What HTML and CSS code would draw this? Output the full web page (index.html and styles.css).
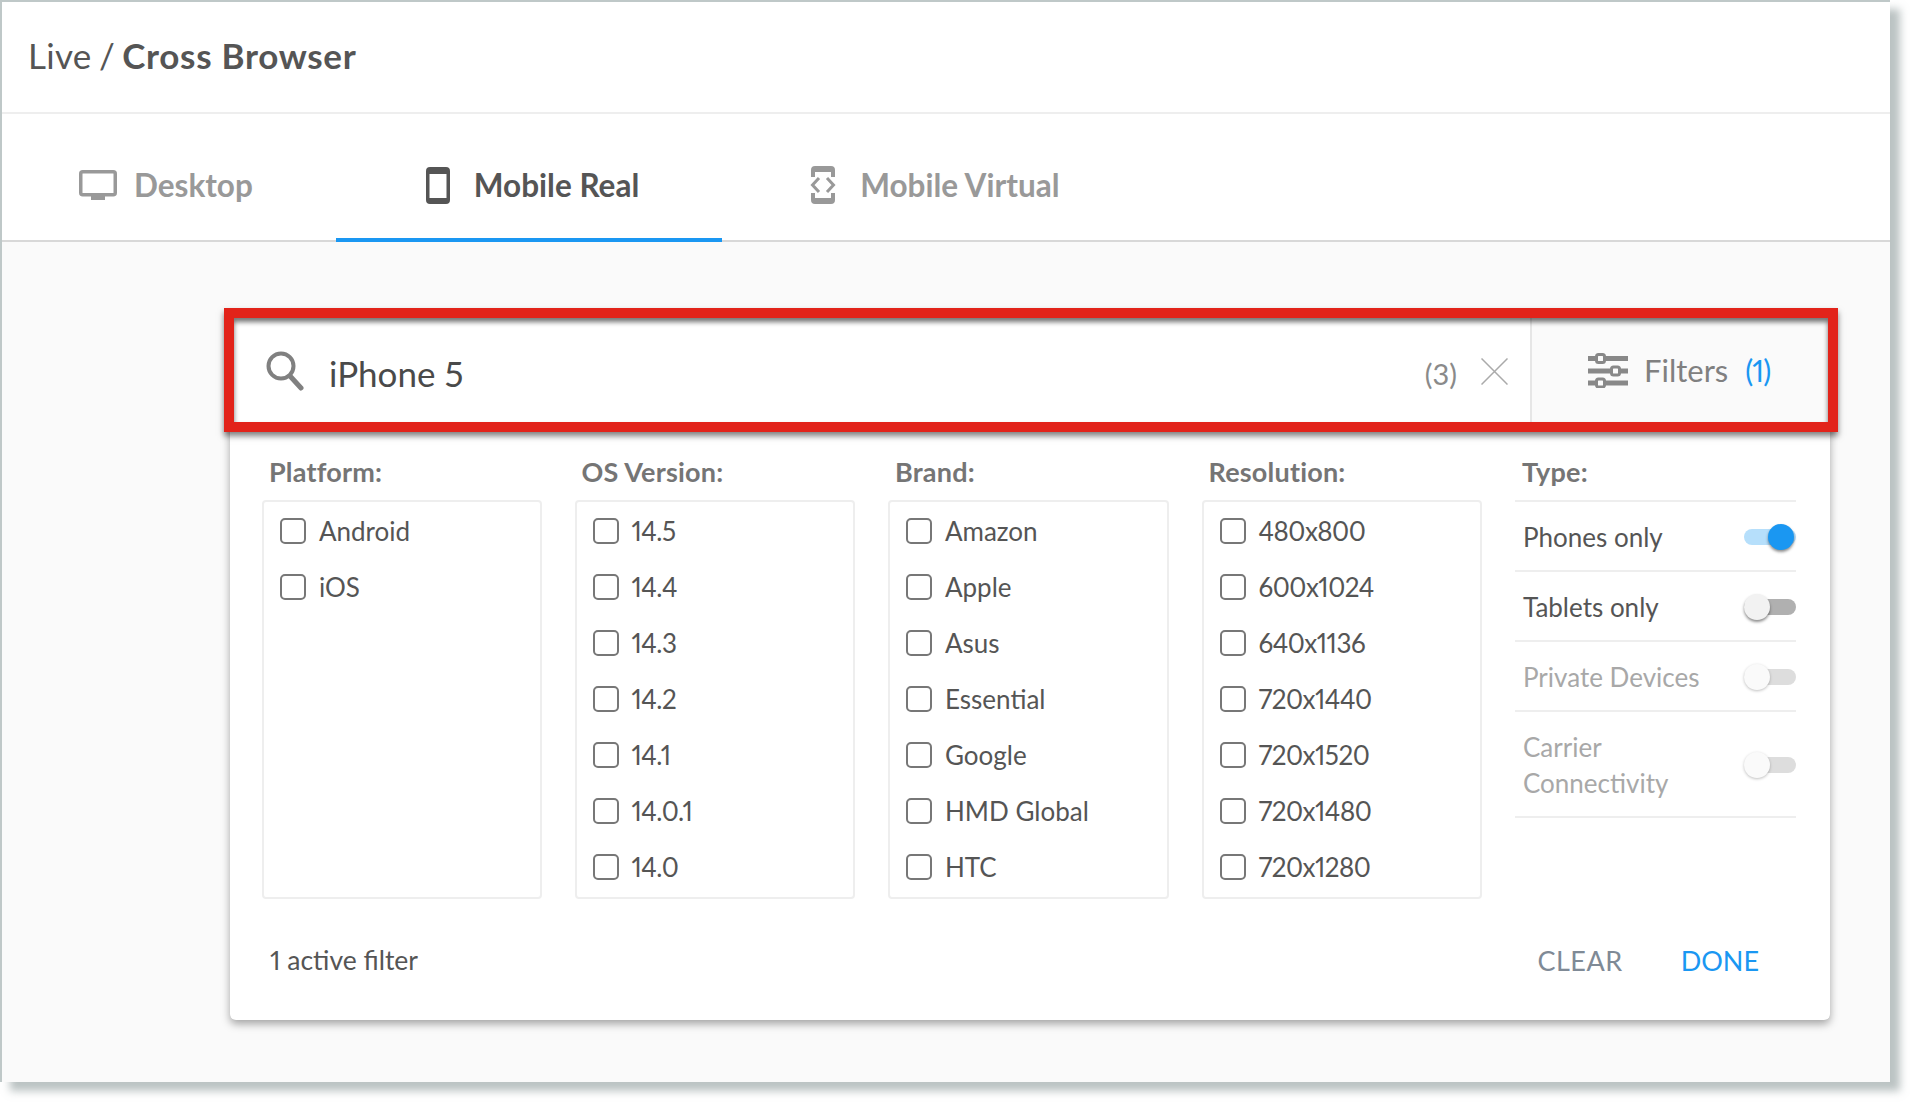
FILE: index.html
```html
<!DOCTYPE html>
<html lang="en">
<head>
    <meta charset="UTF-8">
    <title>Live / Cross Browser</title>
    <link rel="stylesheet" href="styles.css">
</head>
<body>
    <div class="window">
        <header class="title-bar"><span>Live / <strong>Cross Browser</strong></span></header>

        <nav class="tabs">
            <a class="tab">
                <svg class="tab-icon" width="38" height="30" viewBox="0 0 38 30">
                    <rect x="1.750" y="1.750" width="34.500" height="23" rx="2" fill="none" stroke="#999" stroke-width="3.500"/>
                    <rect x="12" y="25" width="14" height="5" fill="#999"/>
                </svg>
                Desktop
            </a>
            <a class="tab">
                <svg class="tab-icon" width="24" height="37" viewBox="0 0 24 37">
                    <path fill-rule="evenodd" d="M4 0h16a4 4 0 0 1 4 4v29a4 4 0 0 1-4 4H4a4 4 0 0 1-4-4V4a4 4 0 0 1 4-4zM3.500 7v24h17V7z" fill="#555"/>
                </svg>
                Mobile Real
            </a>
            <a class="tab">
                <svg class="tab-icon" width="26" height="38" viewBox="0 0 26 38">
                    <path d="M1 11V4a4 4 0 0 1 4-4h16a4 4 0 0 1 4 4v7h-4V6H5v5zM1 27v7a4 4 0 0 0 4 4h16a4 4 0 0 0 4-4v-7h-4v5H5v-5z" fill="#999"/>
                    <path d="M9 12l-6.500 7 6.500 7M17 12l6.500 7-6.500 7" fill="none" stroke="#999" stroke-width="3"/>
                </svg>
                Mobile Virtual
            </a>
        </nav>

        <main class="content">
            <section class="panel">
                <div class="search-bar">
                    <div class="search-box">
                        <svg class="search-icon" width="38" height="40" viewBox="0 0 38 40">
                            <circle cx="15" cy="15" r="12.500" fill="none" stroke="#808080" stroke-width="4"/>
                            <path d="M24 25l11 12" fill="none" stroke="#808080" stroke-width="5" stroke-linecap="round"/>
                        </svg>
                        <span class="search-text">iPhone 5</span>
                        <span class="search-count">(3)</span>
                        <svg class="search-clear" width="27" height="27" viewBox="0 0 27 27">
                            <path d="M0.500 0.500l26 26M26.500 0.500l-26 26" fill="none" stroke="#aaa" stroke-width="1.500"/>
                        </svg>
                    </div>
                    <div class="filter-toggle">
                        <svg width="40" height="35" viewBox="0 0 40 35">
                            <g fill="none" stroke="#888">
                                <path d="M0 5.500h40M0 18h40M0 30h40" stroke-width="5"/>
                                <rect x="8.500" y="1.500" width="8" height="8" rx="2" fill="#fafafa" stroke-width="3"/>
                                <rect x="23.500" y="14" width="8" height="8" rx="2" fill="#fafafa" stroke-width="3"/>
                                <rect x="8.500" y="26" width="8" height="8" rx="2" fill="#fafafa" stroke-width="3"/>
                            </g>
                        </svg>
                        <span class="filter-label">Filters</span>
                        <span class="filter-count">(1)</span>
                    </div>
                </div>

                <div class="filters">
                    <div class="filter-col">
                        <h4>Platform:</h4>
                        <ul class="option-box">
                            <li><span class="checkbox"></span>Android</li>
                            <li><span class="checkbox"></span>iOS</li>
                        </ul>
                    </div>
                    <div class="filter-col">
                        <h4>OS Version:</h4>
                        <ul class="option-box numeric">
                            <li><span class="checkbox"></span>14.5</li>
                            <li><span class="checkbox"></span>14.4</li>
                            <li><span class="checkbox"></span>14.3</li>
                            <li><span class="checkbox"></span>14.2</li>
                            <li><span class="checkbox"></span>14.1</li>
                            <li><span class="checkbox"></span>14.0.1</li>
                            <li><span class="checkbox"></span>14.0</li>
                        </ul>
                    </div>
                    <div class="filter-col">
                        <h4>Brand:</h4>
                        <ul class="option-box">
                            <li><span class="checkbox"></span>Amazon</li>
                            <li><span class="checkbox"></span>Apple</li>
                            <li><span class="checkbox"></span>Asus</li>
                            <li><span class="checkbox"></span>Essential</li>
                            <li><span class="checkbox"></span>Google</li>
                            <li><span class="checkbox"></span>HMD Global</li>
                            <li><span class="checkbox"></span>HTC</li>
                        </ul>
                    </div>
                    <div class="filter-col">
                        <h4>Resolution:</h4>
                        <ul class="option-box numeric">
                            <li><span class="checkbox"></span>480x800</li>
                            <li><span class="checkbox"></span>600x1024</li>
                            <li><span class="checkbox"></span>640x1136</li>
                            <li><span class="checkbox"></span>720x1440</li>
                            <li><span class="checkbox"></span>720x1520</li>
                            <li><span class="checkbox"></span>720x1480</li>
                            <li><span class="checkbox"></span>720x1280</li>
                        </ul>
                    </div>
                    <div class="filter-col">
                        <h4>Type:</h4>
                        <div class="type-list">
                            <div class="type-row">Phones only<span class="switch on"></span></div>
                            <div class="type-row">Tablets only<span class="switch"></span></div>
                            <div class="type-row disabled">Private Devices<span class="switch"></span></div>
                            <div class="type-row disabled tall"><span>Carrier<br>Connectivity</span><span class="switch"></span></div>
                        </div>
                    </div>
                </div>

                <footer class="panel-footer">
                    <span>1 active filter</span>
                    <div class="actions">
                        <a class="btn-clear">CLEAR</a>
                        <a class="btn-done">DONE</a>
                    </div>
                </footer>

                <div class="highlight"></div>
            </section>
        </main>
    </div>
</body>
</html>
```

FILE: styles.css
```css
* {
    box-sizing: border-box;
}
body {
    margin: 0;
    height: 1102px;
    overflow: hidden;
    background: #fff;
    font-family: Lato, "Open Sans", sans-serif;
    font-variant-numeric: proportional-nums;
    color: #555;
}
.window {
    width: 1890px;
    height: 1082px;
    border-top: 2px solid #bfc8c8;
    border-left: 2px solid #bfc8c8;
    box-shadow: 10px 9px 8px rgba(120, 135, 135, 0.5);
    background: #fff;
    display: flex;
    flex-direction: column;
}
.title-bar {
    height: 112px;
    padding: 0 0 4px 26px;
    display: flex;
    align-items: center;
    font-size: 35px;
    letter-spacing: 0.3px;
    word-spacing: -2px;
    border-bottom: 2px solid #eee;
}
.title-bar strong {
    font-weight: 700;
    letter-spacing: 0.7px;
    word-spacing: 0;
}
.tabs {
    height: 128px;
    display: flex;
    border-bottom: 2px solid #d8d8d8;
}
.tab {
    height: 128px;
    padding: 18px 83px 0 90px;
    display: flex;
    align-items: center;
    gap: 24px;
    font-size: 31.5px;
    font-weight: 700;
    color: #999;
    border-bottom: 4px solid transparent;
}
.tab:first-child {
    padding-left: 77px;
    gap: 17px;
}
.tab:nth-child(2) {
    color: #555;
    border-bottom-color: #1a97f2;
}
.tab:last-child {
    padding-left: 88px;
}
.content {
    flex: 1;
    background: #fafafa;
    padding: 72px 60px 0 228px;
}
.panel {
    position: relative;
    height: 706px;
    background: #fff;
    border-radius: 6px;
    box-shadow: 0 4px 8px rgba(0, 0, 0, 0.35);
}
.search-bar {
    height: 112px;
    display: flex;
}
.search-box {
    flex: 1;
    display: flex;
    align-items: center;
    padding: 2px 0 0 36px;
}
.search-text {
    margin: 4px 0 0 25px;
    font-size: 35px;
    color: #4a4a4a;
}
.search-count {
    margin: 4px 0 0 auto;
    font-size: 29px;
    color: #8a8a8a;
}
.search-clear {
    margin: 0 22px 0 24px;
}
.filter-toggle {
    width: 300px;
    padding-left: 56px;
    display: flex;
    align-items: center;
    background: #fafafa;
    border-left: 2px solid #e6e6e6;
    font-size: 31px;
}
.filter-label {
    margin-left: 16px;
    color: #808080;
}
.filter-count {
    margin-left: 17px;
    color: #1a97f2;
    font-size: 30px;
    letter-spacing: -1px;
}
.filters {
    padding: 26px 34px 0 32px;
    display: grid;
    grid-template-columns: 279.5px 280.5px 280.5px 280.5px 281px;
    column-gap: 33px;
}
.filter-col h4 {
    margin: 0 0 8px;
    height: 40px;
    line-height: 40px;
    padding-left: 7px;
    font-size: 27px;
    font-weight: 700;
    letter-spacing: 0.2px;
    color: #757575;
}
.option-box {
    margin: 0;
    padding: 1px 0 0;
    list-style: none;
    height: 399px;
    border: 2px solid #eee;
    border-radius: 4px;
}
.option-box li {
    height: 56px;
    padding-left: 16px;
    display: flex;
    align-items: center;
    gap: 13px;
    font-size: 26px;
}
.option-box.numeric li {
    letter-spacing: -0.5px;
}
.checkbox {
    width: 26px;
    height: 26px;
    border: 2px solid #777;
    border-radius: 5px;
}
.type-list {
    border-top: 2px solid #eee;
}
.type-row {
    height: 70px;
    padding: 2px 0 0 8px;
    display: flex;
    align-items: center;
    justify-content: space-between;
    border-bottom: 2px solid #eee;
    font-size: 26px;
}
.type-row.tall {
    height: 106px;
    line-height: 36px;
}
.type-row.disabled {
    color: #a8a8a8;
}
.switch {
    position: relative;
    width: 52px;
    height: 16px;
    border-radius: 8px;
    background: #b0b0b0;
}
.switch::after {
    content: "";
    position: absolute;
    left: 0;
    top: -5px;
    width: 26px;
    height: 26px;
    border-radius: 50%;
    background: #f2f2f2;
    box-shadow: 0 2px 3px rgba(0, 0, 0, 0.45);
}
.switch.on {
    background: #b6dffb;
}
.switch.on::after {
    left: 24px;
    background: #1a97f2;
}
.disabled .switch {
    background: #ddd;
}
.disabled .switch::after {
    background: #fafafa;
    box-shadow: 0 1px 3px rgba(0, 0, 0, 0.25);
}
.panel-footer {
    margin-top: 31px;
    padding: 0 71px 0 40px;
    height: 60px;
    display: flex;
    align-items: center;
    justify-content: space-between;
    font-size: 26.5px;
}
.actions {
    display: flex;
    gap: 58px;
    font-size: 27px;
}
.btn-clear {
    color: #7f8a96;
    letter-spacing: 0.5px;
}
.btn-done {
    color: #1a97f2;
}
/* red annotation drawn over the search bar */
.highlight {
    position: absolute;
    left: -6px;
    top: -6px;
    right: -8px;
    height: 124px;
    border: 10px solid #e2231a;
    box-shadow: 0 4px 6px rgba(0, 0, 0, 0.5), inset 0 4px 5px rgba(0, 0, 0, 0.55);
}
```
